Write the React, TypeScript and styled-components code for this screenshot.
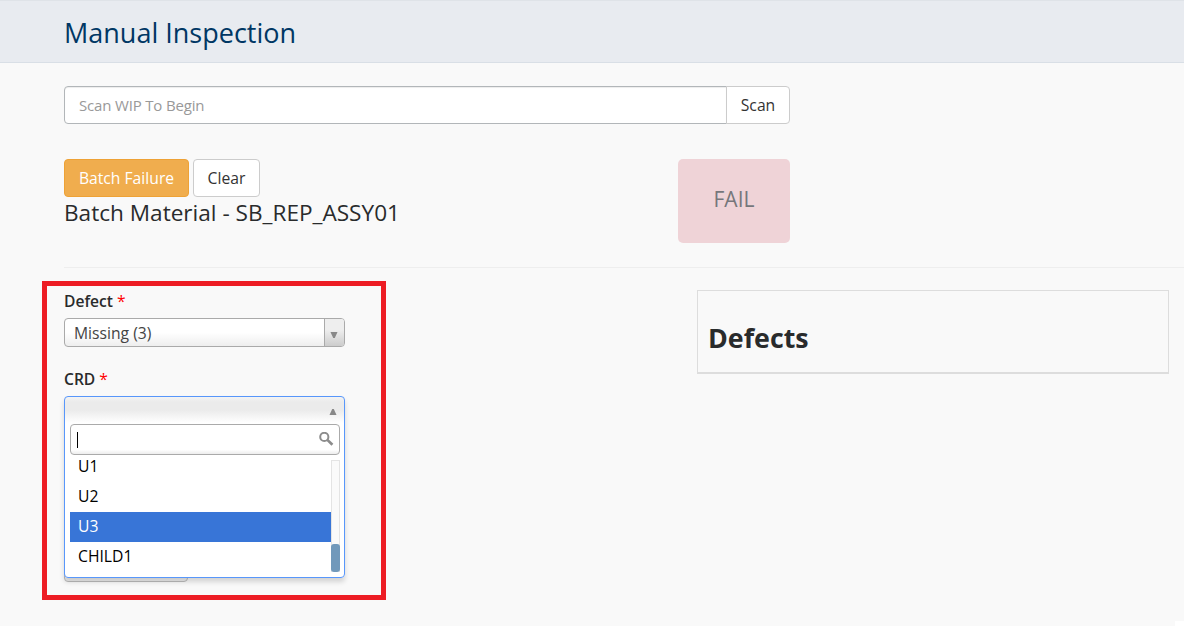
import React from "react";
import styled, { createGlobalStyle } from "styled-components";

const GlobalStyle = createGlobalStyle`
  * { box-sizing: border-box; }
  html, body { margin: 0; height: 100%; }
  body {
    background: #f9f9f9;
    color: #292b2c;
    font-family: "Open Sans", "Noto Sans", sans-serif;
    font-size: 15.7px;
    line-height: 20px;
    overflow: hidden;
  }
  button, input { font: inherit; color: inherit; margin: 0; }
`;

const Page = styled.div`
  position: relative;
  height: 626px;
  overflow: hidden;
`;

const Header = styled.header`
  height: 63px;
  padding: 12px 64px 0;
  background: #e8ebf0;
  border-top: 1px solid #dfe3e8;
  border-bottom: 1px solid #d9dfe6;
`;

const Title = styled.h1`
  margin: 0;
  font-size: 27px;
  line-height: 40px;
  font-weight: 400;
  color: #003764;
`;

const Main = styled.main`
  padding: 23px 0 0 64px;
`;

const ScanGroup = styled.div`
  display: flex;
  width: 726px;
  height: 38px;
`;

const ScanInput = styled.input`
  flex: 1;
  min-width: 0;
  padding: 0 14px;
  border: 1px solid #b2b6b9;
  border-radius: 4px 0 0 4px;
  background: #fff;
  box-shadow: inset 0 1px 1px rgba(0, 0, 0, 0.075);
  outline: 0;
  font-size: 15px;
  letter-spacing: -0.17px;
  &::placeholder { color: #999; opacity: 1; }
`;

const Button = styled.button<{ $tone?: "warning" }>`
  height: 38px;
  padding: 0 0 1px;
  border: 1px solid ${(p) => (p.$tone ? "#eea236" : "#ccc")};
  border-radius: 4px;
  background: ${(p) => (p.$tone ? "#f0ad4e" : "#fff")};
  color: ${(p) => (p.$tone ? "#fff" : "#333")};
`;

const ScanButton = styled(Button)`
  width: 64px;
  margin-left: -1px;
  border-radius: 0 4px 4px 0;
`;

const BatchRow = styled.div`
  display: flex;
  justify-content: space-between;
  align-items: flex-start;
  width: 726px;
  margin-top: 35px;
`;

const Actions = styled.div`
  display: flex;
  gap: 4px;
`;

const BatchButton = styled(Button)`
  width: 125px;
`;

const ClearButton = styled(Button)`
  width: 67px;
`;

const Material = styled.h2`
  margin: 0;
  font-size: 22.6px;
  line-height: 32px;
  font-weight: 400;
`;

const FailButton = styled.button`
  width: 112px;
  height: 84px;
  padding: 0 0 4px;
  border: 0;
  border-radius: 5px;
  background: #efd3d7;
  color: #76777b;
  font-size: 21px;
`;

const Divider = styled.hr`
  height: 1px;
  margin: 24px 0 0;
  border: 0;
  background: #eee;
`;

const Columns = styled.div`
  display: flex;
  justify-content: space-between;
  align-items: flex-start;
  padding: 22px 15px 0 0;
`;

const Form = styled.form`
  position: relative;
  width: 281px;
`;

const Highlight = styled.div`
  position: absolute;
  top: -9px;
  left: -22px;
  width: 344px;
  height: 319px;
  border: 5px solid #ed1c24;
  pointer-events: none;
`;

const Field = styled.div`
  margin-bottom: 21px;
`;

const Label = styled.label`
  display: block;
  height: 28px;
  padding-top: 1px;
  font-weight: 600;
  font-size: 15.6px;
`;

const Required = styled.span`
  color: #f00;
  font-weight: 400;
`;

const SelectBox = styled.div`
  display: flex;
  height: 29px;
  border: 1px solid #aaa;
  border-radius: 4px;
  overflow: hidden;
  background: linear-gradient(to bottom, #fff 50%, #eee 100%);
  color: #444;
`;

const SelectValue = styled.span`
  flex: 1;
  padding: 4px 10px 0 9px;
`;

const SelectArrow = styled.span`
  display: flex;
  justify-content: center;
  width: 20px;
  padding: 13px 1px 0 0;
  border-left: 1px solid #aaa;
  background: linear-gradient(to bottom, #eee 40%, #ccc 100%);
`;

const ComboArea = styled.div`
  position: relative;
  height: 186px;
`;

const HiddenSubmit = styled(Button)`
  width: 124px;
  margin-top: 148px;
  border-color: #bbb;
  background: #eee;
`;

const Dropdown = styled.div`
  position: absolute;
  inset: 0 0 auto;
  height: 182px;
  padding: 0 4px 5px 5px;
  border: 1px solid #5897fb;
  border-radius: 4px;
  background: linear-gradient(to bottom, #f4f4f4 0, #ebebeb 5px, #ebebeb 13px, #fff 26px);
  box-shadow: 0 4px 5px rgba(0, 0, 0, 0.15);
`;

const OpenHead = styled.div`
  display: flex;
  justify-content: flex-end;
  height: 27px;
  padding: 12px 3px 0 0;
`;

const SearchBox = styled.div`
  display: flex;
  justify-content: space-between;
  height: 31px;
  padding: 7px 5px 0 6px;
  border: 1px solid #aaa;
  border-radius: 4px;
  background: linear-gradient(to bottom, #fff 85%, #eee 99%);
`;

const Caret = styled.span`
  width: 1px;
  height: 16px;
  background: #000;
`;

const Results = styled.div`
  display: flex;
  height: 117px;
  overflow: hidden;
`;

const OptionList = styled.ul`
  flex: 1;
  margin: -3px 0 0;
  padding: 0;
  list-style: none;
`;

const Option = styled.li<{ $active?: boolean }>`
  height: 30px;
  padding: 4px 8px 0;
  background: ${(p) => (p.$active ? "#3875d7" : "transparent")};
  color: ${(p) => (p.$active ? "#fff" : "#000")};
`;

const Track = styled.div`
  display: flex;
  align-items: flex-end;
  width: 9px;
  height: 112px;
  margin-top: 5px;
  border: 1px solid #e4e4e4;
  border-bottom: 0;
  background: #fafafa;
`;

const Thumb = styled.div`
  flex: none;
  width: 9px;
  height: 28px;
  margin: 0 -1px;
  border-radius: 3px;
  background: #7199bb;
`;

const DefectsPanel = styled.section`
  width: 472px;
  height: 84px;
  padding: 27px 10px 0;
  border: 1px solid #ddd;
  border-bottom-width: 2px;
`;

const DefectsTitle = styled.h2`
  margin: 0;
  font-size: 26.8px;
  line-height: 40px;
  font-weight: 700;
`;

const Corner = styled.div`
  position: absolute;
  right: 0;
  bottom: 0;
  width: 9px;
  height: 5px;
  background: #fff;
`;

const ITEMS = ["U1", "U2", "U3", "CHILD1"];

function Arrow({ up = false }: { up?: boolean }) {
  return (
    <svg width="8" height="6" viewBox="0 0 8 6" aria-hidden="true">
      <path d={up ? "M.5 6 3.2 0h1.6L7.5 6z" : "M.5 0h7L4.8 6H3.2z"} fill="#888" />
    </svg>
  );
}

function SearchIcon() {
  return (
    <svg width="15" height="15" viewBox="0 0 15 15" fill="none" stroke="#8c8c8c" aria-hidden="true">
      <circle cx="5.3" cy="4.9" r="4.1" strokeWidth="2" />
      <path d="M8.4 7.9 13.4 12.7" strokeWidth="2.7" />
    </svg>
  );
}

export default function App() {
  return (
    <Page>
      <GlobalStyle />
      <Header>
        <Title>Manual Inspection</Title>
      </Header>
      <Main>
        <ScanGroup>
          <ScanInput placeholder="Scan WIP To Begin" />
          <ScanButton>Scan</ScanButton>
        </ScanGroup>
        <BatchRow>
          <div>
            <Actions>
              <BatchButton $tone="warning">Batch Failure</BatchButton>
              <ClearButton>Clear</ClearButton>
            </Actions>
            <Material>Batch Material - SB_REP_ASSY01</Material>
          </div>
          <FailButton>FAIL</FailButton>
        </BatchRow>
        <Divider />
        <Columns>
          <Form>
            <Field>
              <Label>Defect <Required>*</Required></Label>
              <SelectBox>
                <SelectValue>Missing (3)</SelectValue>
                <SelectArrow><Arrow /></SelectArrow>
              </SelectBox>
            </Field>
            <Label>CRD <Required>*</Required></Label>
            <ComboArea>
              <HiddenSubmit type="button" aria-label="Submit" />
              <Dropdown>
                <OpenHead><Arrow up /></OpenHead>
                <SearchBox><Caret /><SearchIcon /></SearchBox>
                <Results>
                  <OptionList>
                    {ITEMS.map((item) => (
                      <Option key={item} $active={item === "U3"}>{item}</Option>
                    ))}
                  </OptionList>
                  <Track><Thumb /></Track>
                </Results>
              </Dropdown>
            </ComboArea>
            <Highlight />
          </Form>
          <DefectsPanel>
            <DefectsTitle>Defects</DefectsTitle>
          </DefectsPanel>
        </Columns>
      </Main>
      <Corner />
    </Page>
  );
}
